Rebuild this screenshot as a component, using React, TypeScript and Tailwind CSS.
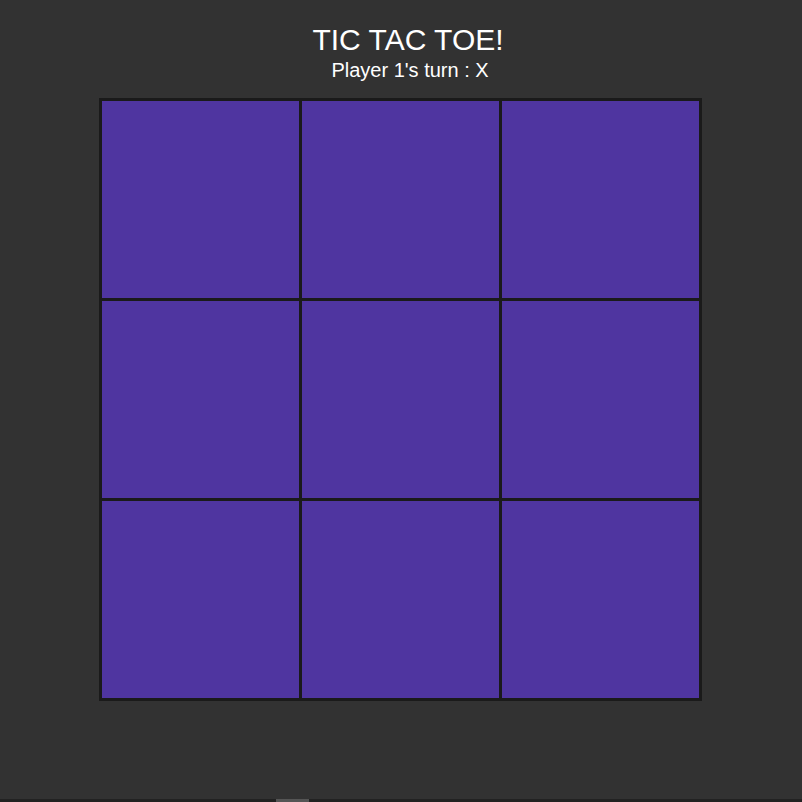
export default function App() {
  const cells = Array.from({ length: 9 });
  return (
    <div className="w-[802px] h-[802px] bg-[#323232] flex flex-col overflow-hidden" style={{ fontFamily: '"Liberation Sans", Arial, sans-serif' }}>
      <div className="flex-1 flex flex-col items-center">
        <div className="pt-[22px] pl-[14px] text-[30px] leading-[36px] text-white">TIC TAC TOE!</div>
        <div className="pl-[18px] text-[20px] leading-[24px] text-white">Player 1's turn : X</div>
        <div className="mt-[16px] ml-[-1px] grid grid-cols-[197px_197px_197px] grid-rows-[197px_197px_197px] gap-[3px] p-[3px] bg-[#1a1a1a]">
          {cells.map((_, i) => (
            <div key={i} className="bg-[#4f35a0]" />
          ))}
        </div>
      </div>
      <div className="h-[3px] bg-[#222222] flex">
        <div className="ml-[276px] w-[33px] h-full bg-[#555555]" />
      </div>
    </div>
  );
}
